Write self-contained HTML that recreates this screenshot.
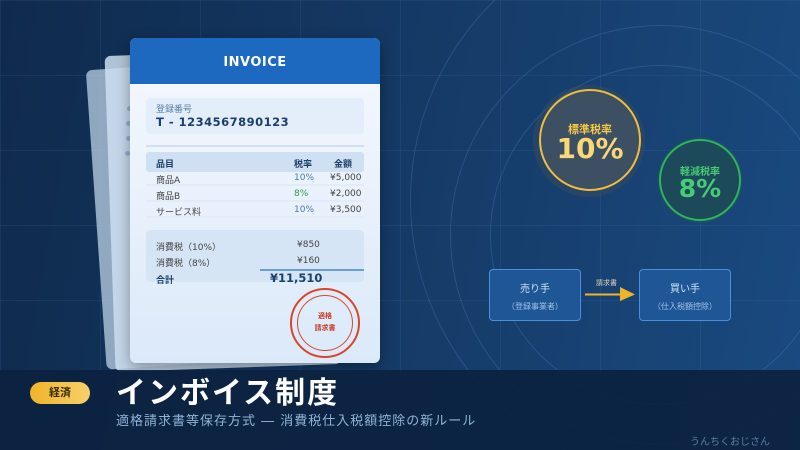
<!DOCTYPE html>
<html style="width:800px;height:450px;overflow:hidden;background:#0f2a4c"><head><meta charset="utf-8"><style>
*{margin:0;padding:0;box-sizing:border-box}
body{width:800px;height:450px;overflow:hidden;font-family:"DejaVu Sans","Noto Sans CJK JP",sans-serif}
#w{position:relative;width:800px;height:450px;overflow:hidden;background:linear-gradient(100deg,#0f2a4c 0%,#153a66 50%,#1a4a80 100%)}
.grid{position:absolute;left:0;top:0;width:800px;height:450px;background-image:linear-gradient(rgba(80,140,210,.12) 1px,transparent 1px),linear-gradient(90deg,rgba(80,140,210,.12) 1px,transparent 1px);background-size:100px 75px}
.ring{position:absolute;border-radius:50%;border:1px solid rgba(90,150,220,.25)}
.abs{position:absolute}
.paper{position:absolute;border-radius:6px}
.card{position:absolute;left:130px;top:38px;width:250px;height:325px;border-radius:6px;overflow:hidden;background:linear-gradient(180deg,#f6f9fe,#dbe9f9);box-shadow:0 4px 14px rgba(0,0,0,.35)}
.hd{height:46px;background:#1d69bf;color:#fff;font-weight:bold;font-size:13px;text-align:center;line-height:50px;letter-spacing:.5px}
.t{position:absolute;font-size:9px;color:#444}
</style></head><body><div id="w">
<div class="grid"></div>
<div class="ring" style="left:410px;top:-80px;width:560px;height:560px"></div>
<div class="ring" style="left:450px;top:25px;width:420px;height:420px"></div>
<div class="ring" style="left:490px;top:65px;width:340px;height:340px"></div>

<div class="paper" style="left:96px;top:62px;width:230px;height:300px;background:rgba(200,220,240,.7);transform:rotate(-4deg)"></div>
<div class="paper" style="left:110px;top:52px;width:226px;height:316px;background:rgba(205,222,240,.85);transform:rotate(-2deg)"></div>
<div class="abs" style="left:127px;top:106px;width:5px;height:5px;border-radius:3px;background:#8fb0d2"></div>
<div class="abs" style="left:126px;top:121px;width:5px;height:5px;border-radius:3px;background:#8fb0d2"></div>
<div class="abs" style="left:126px;top:136px;width:5px;height:5px;border-radius:3px;background:#8fb0d2"></div>
<div class="abs" style="left:125px;top:151px;width:5px;height:5px;border-radius:3px;background:#8fb0d2"></div>

<div class="card">
<div class="hd">INVOICE</div>
<div class="abs" style="left:16px;top:60px;width:218px;height:36px;background:#e3eefa;border-radius:4px"></div>
<div class="t" style="left:26px;top:64px;color:#5a80aa">登録番号</div>
<div class="t" style="left:26px;top:77px;font-size:11.5px;font-weight:bold;color:#1c3f6a;letter-spacing:.5px">T - 1234567890123</div>
<div class="abs" style="left:16px;top:107px;width:218px;height:2px;background:#d0e0f2"></div>
<div class="abs" style="left:16px;top:114px;width:218px;height:20px;background:#cfe0f3;border-radius:3px"></div>
<div class="t" style="left:26px;top:119px;font-weight:bold;color:#1c3f6a">品目</div>
<div class="t" style="left:164px;top:119px;font-weight:bold;color:#1c3f6a">税率</div>
<div class="t" style="left:204px;top:119px;font-weight:bold;color:#1c3f6a">金額</div>
<div class="t" style="left:26px;top:135px">商品A</div><div class="t" style="left:164px;top:135px;color:#4a7ab0">10%</div><div class="t" style="left:200px;top:135px">¥5,000</div>
<div class="abs" style="left:16px;top:146px;width:218px;height:2px;background:#e2ecf8"></div>
<div class="t" style="left:26px;top:151px">商品B</div><div class="t" style="left:164px;top:151px;color:#2f9a4a">8%</div><div class="t" style="left:200px;top:151px">¥2,000</div>
<div class="abs" style="left:16px;top:162px;width:218px;height:2px;background:#e2ecf8"></div>
<div class="t" style="left:26px;top:167px">サービス料</div><div class="t" style="left:164px;top:167px;color:#4a7ab0">10%</div><div class="t" style="left:200px;top:167px">¥3,500</div>
<div class="abs" style="left:16px;top:178px;width:218px;height:2px;background:#e2ecf8"></div>
<div class="abs" style="left:16px;top:192px;width:218px;height:52px;background:#d6e5f5;border-radius:4px"></div>
<div class="t" style="left:26px;top:202px">消費税（10%）</div><div class="t" style="left:167px;top:202px">¥850</div>
<div class="t" style="left:26px;top:218px">消費税（8%）</div><div class="t" style="left:167px;top:218px">¥160</div>
<div class="abs" style="left:130px;top:231px;width:104px;height:2px;background:#6a9fd6"></div>
<div class="t" style="left:26px;top:235px;font-weight:bold;color:#1c3f6a">合計</div>
<div class="t" style="left:140px;top:233px;font-size:11.5px;font-weight:bold;color:#1c3f6a">¥11,510</div>
<div class="abs" style="left:160px;top:250px;width:70px;height:70px;border-radius:50%;border:2.5px solid #d9452a"></div>
<div class="abs" style="left:167px;top:257px;width:56px;height:56px;border-radius:50%;border:1px solid #d9452a"></div>
<div class="t" style="left:175px;top:272px;width:40px;text-align:center;font-size:7px;line-height:12px;color:#c83a22;font-weight:bold">適格<br>請求書</div>
</div>

<div class="abs" style="left:533px;top:85px;width:112px;height:112px;border-radius:50%;background:rgba(70,80,90,.35)"></div>
<div class="abs" style="left:539px;top:89px;width:102px;height:102px;border-radius:50%;border:2.5px solid #f1be3c;background:#3c4f63;text-align:center;color:#f4c94a">
<div style="font-size:11px;font-weight:bold;margin-top:30px">標準税率</div>
<div style="font-size:28px;font-weight:bold;line-height:24px;color:#fbd775">10%</div></div>
<div class="abs" style="left:657px;top:137px;width:86px;height:86px;border-radius:50%;background:rgba(40,90,80,.3)"></div>
<div class="abs" style="left:659px;top:139px;width:82px;height:82px;border-radius:50%;border:2px solid #2fb558;background:#1c4a5a;text-align:center;color:#46cc74">
<div style="font-size:10px;font-weight:bold;margin-top:22px">軽減税率</div>
<div style="font-size:25px;font-weight:bold;line-height:22px">8%</div></div>

<div class="abs" style="left:489px;top:269px;width:92px;height:52px;border:1.5px solid #4a90d8;border-radius:4px;background:#1f5696;text-align:center;color:#cfe2f6">
<div style="font-size:10px;margin-top:10px">売り手</div><div style="font-size:8px;margin-top:6px;color:#9fc0e4">（登録事業者）</div></div>
<div class="abs" style="left:639px;top:269px;width:92px;height:52px;border:1.5px solid #4a90d8;border-radius:4px;background:#1f5696;text-align:center;color:#cfe2f6">
<div style="font-size:10px;margin-top:10px">買い手</div><div style="font-size:8px;margin-top:6px;color:#9fc0e4">（仕入税額控除）</div></div>
<div class="abs" style="left:596px;top:278px;font-size:7px;color:#e0d6b8">請求書</div>
<svg class="abs" style="left:584px;top:286px" width="52" height="16"><line x1="1" y1="8.5" x2="38" y2="8.5" stroke="#f0b429" stroke-width="2"/><polygon points="36,1 51,8.5 36,15" fill="#f0b429"/></svg>

<div class="abs" style="left:0;top:370px;width:800px;height:80px;background:rgba(12,34,64,.92)"></div>
<div class="abs" style="left:30px;top:382px;width:60px;height:22px;border-radius:11px;background:linear-gradient(90deg,#f0b429,#f6d06a);color:#3a2a00;font-size:11px;font-weight:bold;text-align:center;line-height:22px">経済</div>
<div class="abs" style="left:116px;top:368px;font-size:30px;font-weight:bold;color:#fff;letter-spacing:2px">インボイス制度</div>
<div class="abs" style="left:116px;top:410px;font-size:13px;color:#8fb3d8;letter-spacing:1px">適格請求書等保存方式 ― 消費税仕入税額控除の新ルール</div>
<div class="abs" style="left:690px;top:433px;font-size:10px;color:#5a7ea4">うんちくおじさん</div>
</div></body></html>
